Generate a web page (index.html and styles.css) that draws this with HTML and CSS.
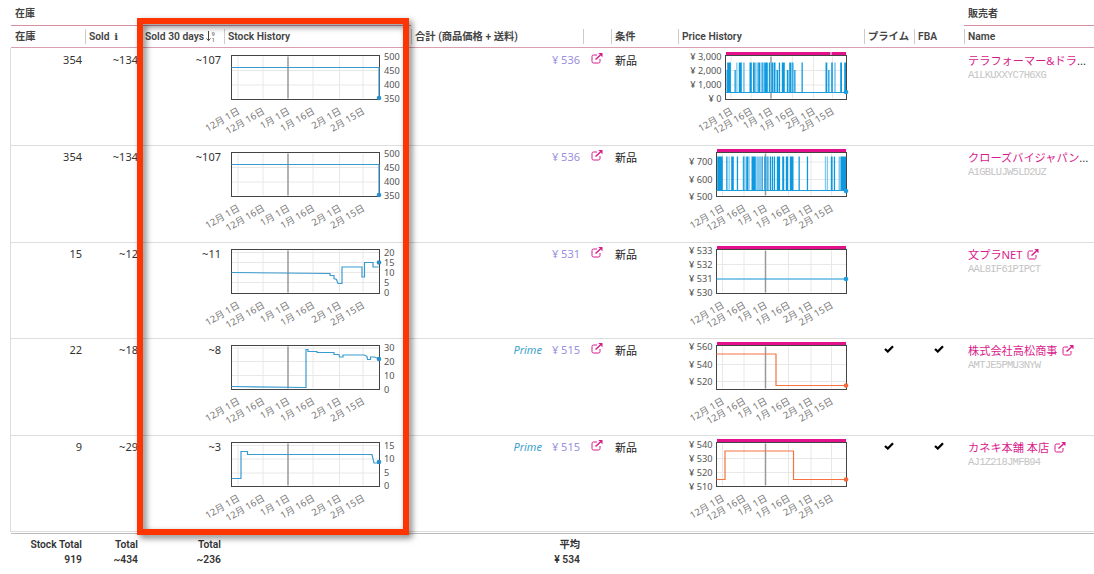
FILE: index.html
```html
<!DOCTYPE html>
<html lang="ja">
<head>
    <meta charset="UTF-8">
    <meta name="viewport" content="width=device-width, initial-scale=1.0">
    <title>在庫</title>
    <link rel="stylesheet" href="styles.css">
</head>
<body>
    <svg class="defs" width="0" height="0">
        <symbol id="ext" viewBox="0 0 12 11">
            <path d="M6 2H2.5Q1 2 1 3.5V8.500Q1 10 2.500 10H7.500Q9 10 9 8.500V6" fill="none" stroke="currentColor" stroke-width="1"/>
            <path d="M4.500 6.500L9.500 2" fill="none" stroke="currentColor" stroke-width="1.500"/>
            <path d="M7.300 0H11.500V4.200Z" fill="currentColor"/>
        </symbol>
        <symbol id="check" viewBox="0 0 10 8">
            <path d="M1 4L3.800 6.500L9 1.300" fill="none" stroke="#000" stroke-width="2.300"/>
        </symbol>
    </svg>
    <div class="grid">
        <div class="groups">
            <div class="group stock-group">在庫</div>
            <div class="group seller-group">販売者</div>
        </div>
        <div class="row head">
            <div>在庫</div>
            <div>Sold <b class="info">i</b></div>
            <div>Sold 30 days
                <svg class="sort" width="10" height="11" viewBox="0 0 10 11">
                    <path d="M2.500 0V9.500M0.500 7.500L2.500 9.700L4.500 7.500" fill="none" stroke="#444" stroke-width="1"/>
                    <text x="5.500" y="4.800">9</text>
                    <text x="5.500" y="10.600">1</text>
                </svg>
            </div>
            <div>Stock History</div>
            <div>合計 (商品価格 + 送料)</div>
            <div></div>
            <div>条件</div>
            <div>Price History</div>
            <div>プライム</div>
            <div>FBA</div>
            <div>Name</div>
        </div>
        <div class="body">
            <div class="row">
                <div class="num">354</div>
                <div class="num sold">~134</div>
                <div class="num">~107</div>
                <div class="chart" data-chart="stock0"></div>
                <div class="num price">¥ 536</div>
                <div class="link"><svg class="ext"><use href="#ext"/></svg></div>
                <div class="cond">新品</div>
                <div class="chart" data-chart="price0"></div>
                <div class="tick"></div>
                <div class="tick"></div>
                <div class="name"><p><a>テラフォーマー&amp;ドラ</a>...</p><small>A1LKUXXYC7H6XG</small></div>
            </div>
            <div class="row">
                <div class="num">354</div>
                <div class="num sold">~134</div>
                <div class="num">~107</div>
                <div class="chart" data-chart="stock1"></div>
                <div class="num price">¥ 536</div>
                <div class="link"><svg class="ext"><use href="#ext"/></svg></div>
                <div class="cond">新品</div>
                <div class="chart" data-chart="price1"></div>
                <div class="tick"></div>
                <div class="tick"></div>
                <div class="name"><p><a>クローズバイジャパン</a>...</p><small>A1GBLUJW5LD2UZ</small></div>
            </div>
            <div class="row short">
                <div class="num">15</div>
                <div class="num sold">~12</div>
                <div class="num">~11</div>
                <div class="chart" data-chart="stock2"></div>
                <div class="num price">¥ 531</div>
                <div class="link"><svg class="ext"><use href="#ext"/></svg></div>
                <div class="cond">新品</div>
                <div class="chart" data-chart="price2"></div>
                <div class="tick"></div>
                <div class="tick"></div>
                <div class="name"><p><a>文プラNET <svg class="ext"><use href="#ext"/></svg></a></p><small>AAL8IF61PIPCT</small></div>
            </div>
            <div class="row">
                <div class="num">22</div>
                <div class="num sold">~18</div>
                <div class="num">~8</div>
                <div class="chart" data-chart="stock3"></div>
                <div class="num price"><i>Prime</i>¥ 515</div>
                <div class="link"><svg class="ext"><use href="#ext"/></svg></div>
                <div class="cond">新品</div>
                <div class="chart" data-chart="price3"></div>
                <div class="tick"><svg><use href="#check"/></svg></div>
                <div class="tick"><svg><use href="#check"/></svg></div>
                <div class="name"><p><a>株式会社高松商事 <svg class="ext"><use href="#ext"/></svg></a></p><small>AMTJE5PMU3NYW</small></div>
            </div>
            <div class="row">
                <div class="num">9</div>
                <div class="num sold">~29</div>
                <div class="num">~3</div>
                <div class="chart" data-chart="stock4"></div>
                <div class="num price"><i>Prime</i>¥ 515</div>
                <div class="link"><svg class="ext"><use href="#ext"/></svg></div>
                <div class="cond">新品</div>
                <div class="chart" data-chart="price4"></div>
                <div class="tick"><svg><use href="#check"/></svg></div>
                <div class="tick"><svg><use href="#check"/></svg></div>
                <div class="name"><p><a>カネキ本舗 本店 <svg class="ext"><use href="#ext"/></svg></a></p><small>AJ1Z218JMFB94</small></div>
            </div>
        </div>
        <div class="row foot">
            <div>Stock Total<br>919</div>
            <div class="sold">Total<br>~434</div>
            <div>Total<br>~236</div>
            <div></div>
            <div>平均<br>¥ 534</div>
        </div>
    </div>
    <div class="highlight"></div>
    <script src="charts.js"></script>
</body>
</html>
```
FILE: styles.css
```css
* {
    box-sizing: border-box;
}
body {
    margin: 0;
    width: 1094px;
    height: 574px;
    overflow: hidden;
    background: #fff;
    color: #333;
    font-family: "Noto Sans", "Noto Sans CJK JP", sans-serif;
    font-size: 11px;
}
.defs {
    display: block;
}
.grid {
    padding-left: 11px;
}
.groups {
    display: flex;
    justify-content: space-between;
    height: 26px;
}
.group {
    padding: 6px 0 0 4px;
    border-bottom: 1px solid #d690a2;
    color: #444;
    font: 600 10px/15px Roboto, "Noto Sans CJK JP", sans-serif;
}
.stock-group {
    width: 400px;
}
.seller-group {
    width: 130px;
}
.row {
    display: grid;
    grid-template-columns: 74px 56px 83px 187px 172px 28px 67px 186px 50px 50px 130px;
}
.head {
    height: 22px;
    padding-top: 3px;
    border-bottom: 1px solid #d8a0ae;
    color: #444;
    font: 600 10.3px/15px Roboto, "Noto Sans CJK JP", sans-serif;
}
.head div {
    height: 15px;
    padding-left: 4px;
    white-space: nowrap;
}
.head div + div {
    padding-left: 3px;
    border-left: 1px solid #ccc;
}
.info {
    margin-left: 2px;
    font-family: "DejaVu Serif", serif;
    font-size: 10px;
}
.sort {
    margin-left: -1px;
    vertical-align: -2px;
}
.sort text {
    font-size: 6px;
    fill: #888;
}
.body {
    border-left: 1px solid #ddd;
    margin-left: -1px;
    padding-top: 1px;
    border-bottom: 1px solid #ddd;
}
.body .row {
    height: 97px;
    border-bottom: 1px solid #ddd;
}
.body .row.short {
    height: 96px;
}
.body .row:last-child {
    height: 95px;
    border-bottom: 0;
}
.num {
    padding: 2px 3px 0 0;
    text-align: right;
    line-height: 18px;
    white-space: nowrap;
}
.num.sold {
    padding-right: 3px;
}
.price {
    color: #9a8fe0;
}
.price i {
    margin-right: 10px;
    color: #3a9fcb;
}
.ext {
    width: 12px;
    height: 11px;
    color: #d81b8c;
}
.link {
    padding: 4px 0 0 8px;
    line-height: 0;
}
.cond {
    padding: 3px 0 0 4px;
    line-height: 17px;
    color: #222;
}
.tick {
    padding-top: 6px;
    text-align: center;
    line-height: 0;
}
.tick svg {
    width: 10px;
    height: 8px;
}
.name {
    padding: 3px 0 0 4px;
    font-size: 11.2px;
    white-space: nowrap;
}
.name p {
    margin: 0;
    height: 16px;
    line-height: 17px;
}
.name a {
    color: #d81b8c;
}
.name .ext {
    margin-left: 2px;
    vertical-align: -1px;
}
.name small {
    display: block;
    font: 10.5px/14px "Liberation Mono", monospace;
    letter-spacing: -0.73px;
    color: #c4c4c4;
}
.foot {
    padding-top: 3px;
    border-top: 1px solid #bbb;
    margin-top: 1px;
    text-align: right;
    font: 600 10.3px/15px Roboto, "Noto Sans CJK JP", sans-serif;
}
.foot div {
    padding-right: 3px;
}

/* charts */
.chart svg {
    display: block;
    overflow: visible;
    font-size: 9.2px;
}
.frame {
    fill: none;
    stroke: #444;
}
.gridline {
    stroke: #e8e8e8;
}
.year {
    stroke: #999;
    stroke-width: 1.5;
}
.date {
    font-size: 9.5px;
    fill: #777;
}
.value {
    fill: #555;
}
.stock-line {
    fill: none;
    stroke: #3a9bd0;
    stroke-width: 1.2;
}
.price-line {
    fill: none;
    stroke: #1b9de0;
    stroke-width: 1.2;
}
.prime-line {
    fill: none;
    stroke: #f47340;
    stroke-width: 1.2;
}
.offer {
    fill: #e3128c;
}

.highlight {
    position: absolute;
    left: 137px;
    top: 18px;
    width: 272px;
    height: 517px;
    border: 6px solid #fe3500;
    filter: drop-shadow(3px 3px 3px rgba(0, 0, 0, 0.5));
}
```
FILE: charts.js
```javascript
const DATES = ['12月 1日', '12月 16日', '1月 1日', '1月 16日', '2月 1日', '2月 15日'];

// ticks: [label, y], path: x,y pairs inside the plot frame, dot: last value
const charts = {
    stock0: { ticks: [['500', 1], ['450', 15], ['400', 29.5], ['350', 43.5]], path: '0,12 147.5,12 147.5,42', dot: 42.5 },
    stock1: { ticks: [['500', 1], ['450', 15], ['400', 29.5], ['350', 43.5]], path: '0,12 147.5,12 147.5,42', dot: 42.5 },
    stock2: {
        ticks: [['20', 3], ['15', 13], ['10', 23], ['5', 33], ['0', 43.5]],
        path: '0,23 98.5,24 98.5,26 102.5,26 102.5,29 105,30 106.5,34 110.5,34 110.5,17.5 130.5,17.5 130.5,27.5 133,27.5 133,13 141.5,13 141.5,17.5 147,17.5',
        dot: 13
    },
    stock3: {
        ticks: [['30', 2.5], ['20', 16], ['10', 30], ['0', 44]],
        path: '0,41 74.5,42 74.5,4 76.5,4 76.5,6 85.5,6 85.5,7 102.5,7 102.5,9 107.5,9 108,11.5 111.5,11.5 111.5,9.5 133,9.5 135.5,11 136,14 139,14 139,11.5 143,11.5 147.5,13.5',
        dot: 13.5
    },
    stock4: {
        ticks: [['15', 3], ['10', 16.5], ['5', 30.5], ['0', 43.5]],
        path: '0,36 9.500,36 9.500,9 16,9 16,12 140.5,12 142.5,20.5 147.5,20.5',
        dot: 19.5
    },
    price0: {
        left: 47.5, width: 121, grid: [5.5, 25.5, 45.5, 67, 88, 107], gap: 105,
        ticks: [['¥ 3,000', 1], ['¥ 2,000', 15], ['¥ 1,000', 29.5], ['¥ 0', 43.5]],
        path: '0,37 120.5,37', dot: 36.5, top: 7,
        bars: [[1, 1, 's'], [1.7, 3.4], [9, 1, 's'], [10.7, 1, 'l'], [13.3, 2.7], [17.5, 1.5, 'l'], [24, 2], [27.5, 1.5], [29.5, 1.3, 'l'],
            [32, 1], [33.500, 1], [35.3, 1, 'l'], [36.7, 1], [38.7, 3.3], [43.3, 1], [44.5, 1, 'l'], [46, 1.2], [48, 1.7], [51, 1.4, 's'],
            [53.3, 1], [56.3, 2.7], [61.3, 1.4, 's'], [63.7, 2], [66.7, 1], [68.7, 1, 's'], [76, 1], [100, 1.5], [102.7, 1, 's'],
            [105.7, 1.3], [108.7, 1.3, 'l'], [114.7, 1.5], [118.7, 2]]
    },
    price1: {
        ticks: [['¥ 700', 9.5], ['¥ 600', 27], ['¥ 500', 44]],
        path: '0,38 129.5,38', dot: 38.5, top: 4,
        bars: [[0.7, 5.3], [9.7, 1], [12, 1, 'l'], [14.7, 2.3], [20.3, 1], [26.3, 1], [27.3, 1.5, 'l'], [29.7, 2], [32, 1, 'l'], [35, 4],
            [39.7, 4.7, 'l'], [45, 1], [47.7, 1], [50, 1], [51.3, 1, 'l'], [53.3, 1], [55.3, 1], [57.3, 1], [60.3, 3], [65.7, 1.7], [69.3, 2],
            [73.3, 3.4], [82, 1], [90.3, 1], [108.3, 1, 'l'], [110.3, 1, 'l'], [114.3, 1.5], [117.3, 1], [122, 1.500, 'l'], [124, 6]]
    },
    price2: { ticks: [['¥ 533', 1], ['¥ 532', 15], ['¥ 531', 29.5], ['¥ 530', 43.5]], path: '0,29.5 129.5,29.5', dot: 29.5 },
    price3: { ticks: [['¥ 560', 1.5], ['¥ 540', 19], ['¥ 520', 36]], path: '0,8.5 59.5,8.5 59.5,40 129.5,40', dot: 40, prime: true },
    price4: {
        ticks: [['¥ 540', 2], ['¥ 530', 16], ['¥ 520', 30], ['¥ 510', 44]],
        path: '0,37 8.5,37 8.5,8.5 77,8.5 77,37 129.5,37', dot: 37, prime: true
    }
};

function draw(el) {
    const name = el.dataset.chart;
    const c = charts[name];
    const stock = name.startsWith('stock');
    const left = c.left || (stock ? 7.5 : 38.5);
    const width = c.width || (stock ? 148 : 130);
    const grid = c.grid || (stock ? [6.5, 31.5, 56.5, 81.5, 108, 131.5] : [6, 27.5, 49, 72, 94.5, 115]);
    const line = stock ? 'stock-line' : c.prime ? 'prime-line' : 'price-line';
    const color = stock ? '#2a8fc8' : c.prime ? '#f4683a' : '#1b9de0';
    let out = '';

    c.ticks.forEach(([, y]) => {
        if (y > 2 && y < 42) out += `<line class="gridline" x1="0" x2="${width}" y1="${y}" y2="${y}"/>`;
    });
    grid.forEach((x, i) => {
        out += `<line class="${i === 2 ? 'year' : 'gridline'}" x1="${x}" x2="${x}" y1="1" y2="43"/>`;
        out += `<text class="date" text-anchor="end" transform="translate(${x + 2.5} 57.5) rotate(-30)">${DATES[i]}</text>`;
    });
    (c.bars || []).forEach(([x, w, kind]) => {
        const y = kind === 's' ? c.top + 7.5 : c.top;
        out += `<rect x="${x}" y="${y}" width="${w + 0.3}" height="${37.5 - y}" fill="${kind === 'l' ? '#80c8f0' : '#0d99df'}"/>`;
    });
    out += `<rect class="frame" width="${width}" height="44"/>`;
    if (!stock) {
        out += `<rect class="offer" x="0.5" y="-3.5" width="${width - 1}" height="3"/>`;
        if (c.gap) out += `<rect x="${c.gap}" y="-3.5" width="1" height="3" fill="#fff"/>`;
    }
    out += `<polyline class="${line}" points="${c.path}"/>`;
    out += `<circle cx="${width - 0.5}" cy="${c.dot}" r="2.3" fill="${color}"/>`;
    c.ticks.forEach(([label, y]) => {
        const x = stock ? 152.5 : -4;
        out += `<text class="value" x="${x}" y="${y + 3.3}" text-anchor="${stock ? 'start' : 'end'}">${label}</text>`;
    });
    el.innerHTML = `<svg width="180" height="90"><g transform="translate(${left} 6.5)">${out}</g></svg>`;
}

document.querySelectorAll('.chart').forEach(draw);
```
